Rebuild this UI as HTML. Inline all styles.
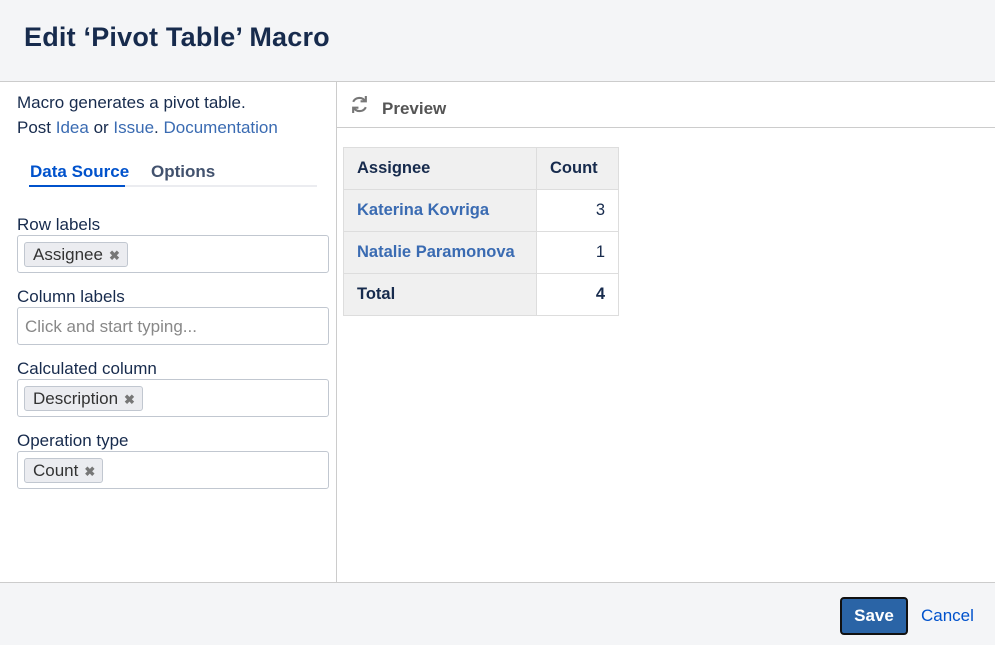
<!DOCTYPE html>
<html><head><style>
*{box-sizing:border-box;margin:0;padding:0}
body{width:995px;height:645px;overflow:hidden;font-family:"Liberation Sans",sans-serif;color:#172b4d;background:#fff;position:relative;font-size:16px}
.hdr{position:absolute;left:0;top:0;width:995px;height:82px;background:#f4f5f7;border-bottom:1px solid #ccc}
.hdr h1{position:absolute;left:24px;top:22px;font-size:27px;font-weight:bold;color:#172b4d;letter-spacing:0.2px}
.left{position:absolute;left:0;top:82px;width:337px;height:500px;border-right:1px solid #ccc}
.ftr{position:absolute;left:0;top:582px;width:995px;height:63px;background:#f4f5f7;border-top:1px solid #ccc}
a{color:#3a6bb2;text-decoration:none}
.t{position:absolute;left:17px;font-size:17px;color:#172b4d}
.inp{position:absolute;left:17px;width:312px;height:38px;border:1px solid #c1c7d0;border-radius:3px;background:#fff}
.tag{position:absolute;left:6px;top:6px;height:25px;border:1px solid #c1c7d0;border-radius:3px;background:#ebecf0;padding:2px 7px 0 8px;font-size:17px;color:#333}
.tag b{color:#777;font-size:13px;margin-left:6px}
table{position:absolute;left:343px;top:147px;border-collapse:collapse;font-size:16.5px}
td{border:1px solid #ddd;height:42px;padding:0 13px}
</style></head><body>
<div class="hdr"><h1>Edit ‘Pivot Table’ Macro</h1></div>
<div class="left">
<div class="t" style="top:11px">Macro generates a pivot table.</div>
<div class="t" style="top:36px">Post <a>Idea</a> or <a>Issue</a>. <a>Documentation</a></div>
<div style="position:absolute;left:30px;top:80px;font-weight:bold;color:#0052cc;font-size:17px">Data Source</div>
<div style="position:absolute;left:151px;top:80px;font-weight:bold;color:#42526e;font-size:17px">Options</div>
<div style="position:absolute;left:29px;top:103px;width:288px;height:2px;background:#ebecf0"></div>
<div style="position:absolute;left:29px;top:103px;width:96px;height:2px;background:#0052cc"></div>
<div class="t" style="top:133px">Row labels</div>
<div class="inp" style="top:153px"><div class="tag">Assignee<b>✖</b></div></div>
<div class="t" style="top:205px">Column labels</div>
<div class="inp" style="top:225px"><div style="position:absolute;left:7px;top:9px;color:#888;font-size:17px">Click and start typing...</div></div>
<div class="t" style="top:277px">Calculated column</div>
<div class="inp" style="top:297px"><div class="tag">Description<b>✖</b></div></div>
<div class="t" style="top:349px">Operation type</div>
<div class="inp" style="top:369px"><div class="tag">Count<b>✖</b></div></div>
</div>
<div style="position:absolute;left:337px;top:127px;width:658px;height:1px;background:#ccc"></div>
<svg style="position:absolute;left:350px;top:95px" width="19" height="19" viewBox="0 0 18 18" fill="none" stroke="#777" stroke-width="2"><path d="M14.5 6A6.5 6.5 0 0 0 3 6.5"/><path d="M15 1v5h-5"/><path d="M3.5 12a6.5 6.5 0 0 0 11.5-.5"/><path d="M3 17v-5h5"/></svg>
<div style="position:absolute;left:382px;top:99px;font-weight:bold;color:#555;font-size:17px">Preview</div>
<table>
<tr style="background:#f0f0f0;font-weight:bold"><td style="width:193px">Assignee</td><td style="width:82px">Count</td></tr>
<tr><td style="background:#f0f0f0;font-weight:bold;color:#3a6bb2">Katerina Kovriga</td><td style="text-align:right">3</td></tr>
<tr><td style="background:#f0f0f0;font-weight:bold;color:#3a6bb2">Natalie Paramonova</td><td style="text-align:right">1</td></tr>
<tr><td style="background:#f0f0f0;font-weight:bold">Total</td><td style="text-align:right;font-weight:bold">4</td></tr>
</table>
<div class="ftr">
<div style="position:absolute;left:840px;top:14px;width:68px;height:38px;background:#2a64a6;border:2px solid #111;border-radius:4px;color:#fff;font-weight:bold;font-size:17px;text-align:center;line-height:34px">Save</div>
<div style="position:absolute;left:921px;top:23px;color:#0052cc;font-size:17px">Cancel</div>
</div>
</body></html>
